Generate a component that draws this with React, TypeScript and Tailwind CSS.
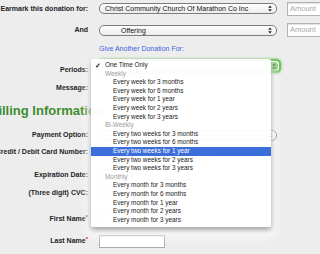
import type { ReactNode } from 'react';

const LABEL = 'w-[130px] shrink-0 text-right text-[7px] font-bold leading-[8px] text-[#1e1e1e]';

const PERIODS: { text: string; kind: 'top' | 'head' | 'item'; checked?: boolean; active?: boolean }[] = [
  { text: 'One Time Only', kind: 'top', checked: true },
  { text: 'Weekly', kind: 'head' },
  { text: 'Every week for 3 months', kind: 'item' },
  { text: 'Every week for 6 months', kind: 'item' },
  { text: 'Every week for 1 year', kind: 'item' },
  { text: 'Every week for 2 years', kind: 'item' },
  { text: 'Every week for 3 years', kind: 'item' },
  { text: 'Bi-Weekly', kind: 'head' },
  { text: 'Every two weeks for 3 months', kind: 'item' },
  { text: 'Every two weeks for 6 months', kind: 'item' },
  { text: 'Every two weeks for 1 year', kind: 'item', active: true },
  { text: 'Every two weeks for 2 years', kind: 'item' },
  { text: 'Every two weeks for 3 years', kind: 'item' },
  { text: 'Monthly', kind: 'head' },
  { text: 'Every month for 3 months', kind: 'item' },
  { text: 'Every month for 6 months', kind: 'item' },
  { text: 'Every month for 1 year', kind: 'item' },
  { text: 'Every month for 2 years', kind: 'item' },
  { text: 'Every month for 3 years', kind: 'item' },
];

function Arrows({ color = '#1e1e1e' }: { color?: string }) {
  return (
    <svg width="4" height="7" viewBox="0 0 4 7" className="shrink-0">
      <path d="M2 0.5L3.8 2.8H0.2Z M2 6.5L3.8 4.2H0.2Z" fill={color} />
    </svg>
  );
}

function Select({ children, className }: { children?: ReactNode; className: string }) {
  return (
    <div
      className={`flex h-[11px] items-center justify-between rounded-[5px] border border-[#7d7d7d] bg-gradient-to-b from-white to-[#ececec] pr-[4px] text-[7px] leading-none text-[#111] ${className}`}
    >
      <span className="whitespace-nowrap">{children}</span>
      <Arrows />
    </div>
  );
}

function Amount() {
  return (
    <div className="ml-[10px] flex h-[14px] w-[60px] shrink-0 items-center border border-[#b3b3b3] bg-white pl-[2px] text-[7.5px] text-[#a8a8a8] shadow-[inset_0_1px_1px_rgba(0,0,0,0.12)]">
      Amount
    </div>
  );
}

function Input({ className }: { className: string }) {
  return <div className={`h-[13px] border border-[#ababab] bg-white shadow-[inset_0_1px_1px_rgba(0,0,0,0.1)] ${className}`} />;
}

function Req({ children }: { children: ReactNode }) {
  return (
    <span className={LABEL}>
      {children}
      <span className="relative -top-[2px] text-[6px] text-[#e00000]">*</span>
    </span>
  );
}

export default function App() {
  return (
    <div className="relative h-[254px] w-[320px] overflow-hidden bg-[#ededed] font-['Liberation_Sans',Arial,sans-serif]">
      <div className="-ml-[42px] flex flex-col">
        <div className="flex h-[17px] items-center">
          <span className={LABEL}>Earmark this donation for:</span>
          <Select className="ml-[11px] w-[178px] shrink-0 pl-[5px]">Christ Community Church Of Marathon Co Inc</Select>
          <Amount />
        </div>

        <div className="flex h-[26px] items-center">
          <span className={LABEL}>And</span>
          <Select className="ml-[11px] w-[178px] shrink-0 pl-[21px]">Offering</Select>
          <Amount />
        </div>

        <div className="flex h-[11px] items-center">
          <span className="w-[130px] shrink-0" />
          <a className="ml-[11px] text-[7px] leading-none text-[#3f5fe0]">Give Another Donation For:</a>
        </div>

        <div className="flex h-[31px] items-center">
          <span className={LABEL}>Periods:</span>
          <div className="ml-[10px] mt-[5px] flex h-[14px] w-[183px] shrink-0 items-center justify-end self-start rounded-[5px] border-2 border-[#68b957] bg-white pr-[1px] shadow-[0_0_2px_1px_rgba(110,200,90,0.6)]">
            <div className="flex h-[9px] w-[8px] items-center justify-center rounded-r-[3px] bg-[#7fcf6c]">
              <Arrows color="#1d4d12" />
            </div>
          </div>
        </div>

        <div className="flex h-[5px] items-center">
          <span className={LABEL}>Message:</span>
        </div>

        <div className="flex h-[40px] items-center">
          <h2 className="ml-[31px] whitespace-nowrap text-[13px] font-bold leading-none text-[#3e8c2e]">Billing Information</h2>
        </div>

        <div className="flex h-[10px] items-center">
          <span className={LABEL}>Payment Option:</span>
          <Select className="ml-[11px] w-[178px] shrink-0 pl-[5px]" />
        </div>

        <div className="flex h-[24px] items-center">
          <span className={LABEL}>Credit / Debit Card Number:</span>
          <Input className="ml-[11px] w-[120px]" />
        </div>

        <div className="flex h-[21px] items-center">
          <span className={LABEL}>Expiration Date:</span>
          <Select className="ml-[11px] w-[40px] shrink-0 pl-[4px]" />
          <Select className="ml-[6px] w-[50px] shrink-0 pl-[4px]" />
        </div>

        <div className="flex h-[16px] items-center">
          <span className={LABEL}>(Three digit) CVC:</span>
          <Input className="ml-[11px] w-[36px]" />
        </div>

        <div className="flex h-[36px] items-center">
          <Req>First Name</Req>
          <Input className="ml-[11px] w-[66px]" />
        </div>

        <div className="flex h-[8px] items-center">
          <Req>Last Name</Req>
          <Input className="ml-[11px] w-[66px]" />
        </div>
      </div>

      <ul className="absolute left-[91px] top-[59px] h-[168px] w-[180px] rounded-[2px] bg-white/[0.96] pt-[2px] text-[6.4px] leading-none text-[#1a1a1a] shadow-[0_3px_5px_rgba(0,0,0,0.35),0_6px_9px_4px_rgba(255,255,255,0.75)]">
        {PERIODS.map((p) => (
          <li
            key={p.text}
            className={`flex h-[8.6px] items-center whitespace-nowrap ${
              p.active ? 'bg-[#3b6ed8] text-white' : p.kind === 'head' ? 'text-[#9a9a9a]' : ''
            } ${p.kind === 'item' ? 'pl-[22px]' : 'pl-[4px]'}`}
          >
            {p.kind !== 'item' && (
              <span className="w-[10px] text-[7px] font-bold">{p.checked ? '✓' : ''}</span>
            )}
            {p.text}
          </li>
        ))}
      </ul>
    </div>
  );
}
